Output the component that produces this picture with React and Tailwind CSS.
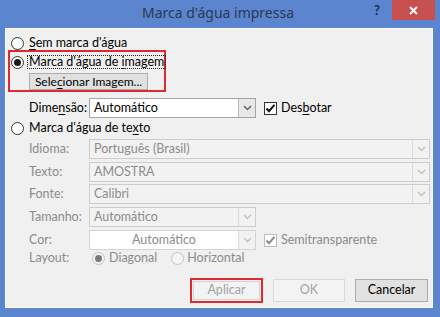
import React from "react";

function Radio({ checked = false, disabled = false }) {
  return (
    <span
      className={
        "w-[13px] h-[13px] rounded-full border flex items-center justify-center shrink-0 " +
        (disabled ? "border-[#c4c4c4] bg-[#f4f4f4]" : "border-[#333333] bg-white")
      }
    >
      {checked && (
        <span
          className={
            "w-[7px] h-[7px] rounded-full " + (disabled ? "bg-[#7a7a7a]" : "bg-[#1a1a1a]")
          }
        />
      )}
    </span>
  );
}

function Checkbox({ disabled = false }) {
  return (
    <span
      className={
        "w-[13px] h-[13px] border flex items-center justify-center shrink-0 bg-white " +
        (disabled ? "border-[#bcbcbc]" : "border-[#333333]")
      }
    >
      <svg width="11" height="11" viewBox="0 0 11 11">
        <path
          d="M1.5 5.5 L4 8.2 L9.5 1.8"
          fill="none"
          stroke={disabled ? "#8a8a8a" : "#111111"}
          strokeWidth="2"
        />
      </svg>
    </span>
  );
}

function Chevron({ color }) {
  return (
    <svg width="9" height="6" viewBox="0 0 9 6">
      <path d="M1 1 L4.5 4.5 L8 1" fill="none" stroke={color} strokeWidth="1.3" />
    </svg>
  );
}

function Select({ text, width, variant = "disabled", center = false }) {
  const enabled = variant === "enabled";
  const white = variant === "white";
  return (
    <div
      className={
        "h-[20px] flex border shrink-0 " +
        width +
        " " +
        (enabled
          ? "bg-white border-[#a5a5a5]"
          : white
          ? "bg-white border-[#d4d4d4]"
          : "bg-[#f2f2f2] border-[#cdcdcd]")
      }
    >
      <div
        className={
          "flex-1 flex items-center whitespace-nowrap " +
          (center ? "justify-center " : "pl-[4px] ") +
          (enabled ? "text-black" : "text-[#8b8b8b]")
        }
      >
        {text}
      </div>
      <div
        className={
          "w-[17px] flex items-center justify-center border-l " +
          (enabled ? "bg-[#e8e8e8] border-[#bdbdbd]" : "bg-[#f2f2f2] border-[#dadada]")
        }
      >
        <Chevron color={enabled ? "#5a5a5a" : "#bdbdbd"} />
      </div>
    </div>
  );
}

function FieldRow({ label, children, mt }) {
  return (
    <div className={"flex items-center " + mt}>
      <div className="w-[83px] pl-[23px] text-[#8b8b8b] shrink-0">{label}</div>
      {children}
    </div>
  );
}

export default function App() {
  return (
    <div className="w-[440px] h-[317px] bg-[#5b86cf] flex flex-col font-['Lato',sans-serif] text-[12.5px] text-black overflow-hidden leading-none whitespace-nowrap">
      <div className="h-[28px] flex items-start shrink-0">
        <div className="w-[66px]" />
        <div className="flex-1 text-center text-[14px] font-['Noto_Sans',sans-serif] text-[#2b3852] pt-[6px]">
          Marca d'água impressa
        </div>
        <div className="w-[70px] flex items-start">
          <div className="w-[22px] pr-[8px] pt-[4px] text-[13px] font-bold text-[#1f2a40] text-center">?</div>
          <div className="w-[43px] h-[20px] bg-[#c75050] flex items-center justify-center">
            <svg width="9" height="9" viewBox="0 0 9 9">
              <path d="M1 1 L8 8 M8 1 L1 8" stroke="#ffffff" strokeWidth="1.8" />
            </svg>
          </div>
        </div>
      </div>

      <div className="ml-[5px] mr-[7px] mb-[9px] flex-1 bg-[#f0f0f0] border border-[#fcfcfc] flex flex-col">
        {/* Sem marca */}
        <div className="mt-[7px] h-[14px] flex items-center ml-[5px] gap-[5px]">
          <Radio />
          <span>
            <u className="underline-offset-2">S</u>em marca d'água
          </span>
        </div>

        {/* red highlighted group */}
        <div className="ml-[2px] w-[158px] h-[42px] border-2 border-[#dc2a30] flex flex-col">
          <div className="mt-[3px] h-[14px] flex items-center ml-[1px] gap-[3px]">
            <Radio checked />
            <span className="border border-dotted border-[#222] px-[1px] h-[14px] flex items-center">
              <span>
                Marca d'água de <u className="underline-offset-2">i</u>magem
              </span>
            </span>
          </div>
          <div className="mt-[4px] ml-[19px] w-[119px] h-[17px] bg-[#e1e1e1] border border-[#adadad] flex items-center justify-center text-[12px]">
            <span>
              Sele<u className="underline-offset-2">c</u>ionar Imagem...
            </span>
          </div>
        </div>

        {/* Dimensão */}
        <div className="mt-[6px] flex items-center">
          <div className="w-[83px] pl-[23px] shrink-0">
            Dime<u className="underline-offset-2">n</u>são:
          </div>
          <Select text="Automático" width="w-[167px]" variant="enabled" />
          <div className="ml-[8px] flex items-center gap-[4px]">
            <Checkbox />
            <span>
              Des<u className="underline-offset-2">b</u>otar
            </span>
          </div>
        </div>

        {/* Marca de texto */}
        <div className="mt-[3px] h-[14px] flex items-center ml-[5px] gap-[5px]">
          <Radio />
          <span>
            Marca d'água de te<u className="underline-offset-2">x</u>to
          </span>
        </div>

        <FieldRow label="Idioma:" mt="mt-[4px]">
          <Select text="Português (Brasil)" width="w-[341px]" />
        </FieldRow>
        <FieldRow label="Texto:" mt="mt-[3px]">
          <Select text="AMOSTRA" width="w-[341px]" />
        </FieldRow>
        <FieldRow label="Fonte:" mt="mt-[2px]">
          <Select text="Calibri" width="w-[341px]" />
        </FieldRow>
        <FieldRow label="Tamanho:" mt="mt-[3px]">
          <Select text="Automático" width="w-[167px]" />
        </FieldRow>
        <FieldRow label="Cor:" mt="mt-[3px]">
          <Select text="Automático" width="w-[167px]" variant="white" center />
          <div className="ml-[8px] flex items-center gap-[4px]">
            <Checkbox disabled />
            <span className="text-[#8b8b8b]">Semitransparente</span>
          </div>
        </FieldRow>

        {/* Layout */}
        <div className="h-[16px] flex items-center">
          <div className="w-[86px] pl-[23px] text-[#8b8b8b] shrink-0">Layout:</div>
          <div className="flex items-center gap-[4px]">
            <Radio checked disabled />
            <span className="text-[#8b8b8b]">Diagonal</span>
          </div>
          <div className="ml-[14px] flex items-center gap-[3px]">
            <Radio disabled />
            <span className="text-[#8b8b8b]">Horizontal</span>
          </div>
        </div>

        {/* Buttons */}
        <div className="mt-[12px] flex items-center justify-end pr-[4px] gap-[10px]">
          <div className="w-[73px] h-[25px] border-2 border-[#dc2a30] p-[1px] flex">
            <div className="flex-1 border border-[#d4d4d4] bg-[#f3f3f3] flex items-center justify-center text-[#a3a3a3]">
              Aplicar
            </div>
          </div>
          <div className="w-[72px] h-[23px] border border-[#d9d9d9] bg-[#f3f3f3] flex items-center justify-center text-[#a3a3a3]">
            OK
          </div>
          <div className="w-[73px] h-[23px] border border-[#adadad] bg-[#e1e1e1] flex items-center justify-center">
            Cancelar
          </div>
        </div>
      </div>
    </div>
  );
}
